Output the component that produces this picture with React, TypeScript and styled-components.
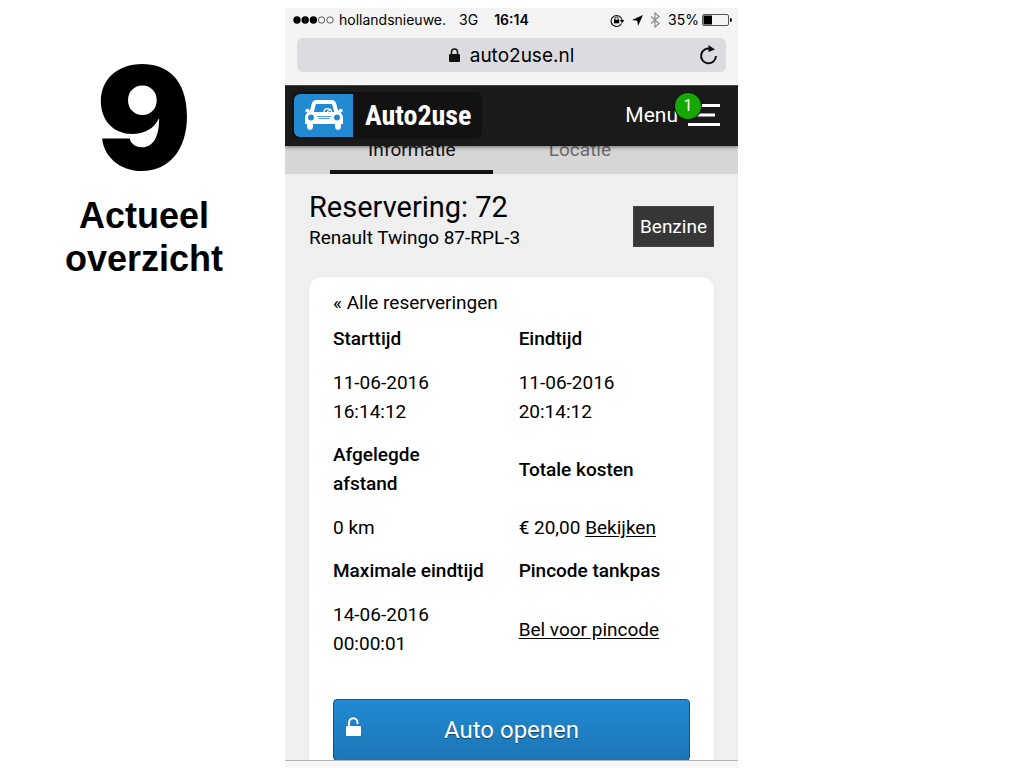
import React from "react";
import styled, { createGlobalStyle } from "styled-components";

const GlobalStyle = createGlobalStyle`
  * { box-sizing: border-box; }
  body { margin: 0; background: #fff; color: #000; }
  h1, h2, p { margin: 0; padding: 0; font-weight: 400; }
`;

const Slide = styled.main`
  display: grid;
  grid-template-columns: 285fr 453fr 286fr;
  height: 100vh;
  padding-top: 8px;
`;

const Caption = styled.section`
  padding: 32px 0 0 3px;
  text-align: center;
  font-family: "Liberation Sans", Arial, sans-serif;
`;

const StepNumber = styled.p`
  font-family: Inter, "Liberation Sans", sans-serif;
  font-size: 142px;
  line-height: 154px;
  font-weight: 900;
`;

const StepTitle = styled.h1`
  width: 160px;
  margin: 0 auto;
  font-size: 36px;
  line-height: 43px;
  font-weight: 700;
`;

const Phone = styled.section`
  display: flex;
  flex-direction: column;
  min-width: 0;
  min-height: 0;
  background: #efefef;
  font-family: Roboto, sans-serif;
  font-size: 19px;
  line-height: 29px;
`;

const BrowserBar = styled.div`
  flex: none;
  padding: 0 12px 12px;
  background: #f4f4f4;
  border-bottom: 1px solid #fff;
  font-family: Inter, sans-serif;
`;

const StatusBar = styled.div`
  display: flex;
  align-items: center;
  height: 24px;
  margin: 0 -6px 6px -4px;
  font-size: 14px;
  line-height: 24px;
  white-space: nowrap;
`;

const Signal = styled.svg`
  flex: none;
  margin-right: 5px;
`;

const Network = styled.span`
  margin-left: 13px;
`;

const Clock = styled.strong`
  margin: 0 auto 0 16px;
  font-weight: 600;
`;

const StatusIcons = styled.span`
  display: flex;
  align-items: center;
  gap: 7px;
  margin-right: 8px;
`;

const BatteryIcon = styled.svg`
  flex: none;
  margin-left: 3px;
`;

const AddressBar = styled.div`
  display: grid;
  grid-template-columns: 1fr auto 1fr;
  align-items: center;
  height: 34px;
  padding: 0 8px;
  border-radius: 6px;
  background: #dcdce0;
  font-size: 19px;
`;

const Address = styled.span`
  display: flex;
  align-items: center;
  gap: 10px;
  grid-column: 2;
`;

const PlainButton = styled.button`
  display: flex;
  justify-self: end;
  padding: 0;
  border: 0;
  background: none;
  color: inherit;
`;

const Viewport = styled.div`
  flex: 1;
  min-height: 0;
  overflow: hidden;
`;

const SiteHeader = styled.header`
  position: relative;
  z-index: 1;
  display: flex;
  align-items: center;
  justify-content: space-between;
  height: 61px;
  padding: 0 18px 2px 7px;
  background: #1a1a1a;
  border-top: 1px solid #444;
  box-shadow: 0 1px 4px rgba(0, 0, 0, 0.5);
`;

const Brand = styled.a`
  display: flex;
  align-items: center;
  gap: 12px;
  padding: 2px 11px 2px 2px;
  border-radius: 7px;
  background: #121212;
  color: #fff;
  font-family: "Liberation Sans Narrow", "Roboto Condensed", "DejaVu Sans Condensed", sans-serif;
  font-size: 28px;
  font-weight: 700;
  text-decoration: none;
`;

const BrandMark = styled.span`
  display: grid;
  place-items: center;
  width: 59px;
  height: 43px;
  border-radius: 6px 0 0 6px;
  background: #218ad3;
`;

const MenuButton = styled(PlainButton)`
  align-items: center;
  gap: 10px;
  color: #fff;
  font-family: inherit;
  font-size: 21px;
  line-height: 29px;
`;

const MenuIcon = styled.span`
  position: relative;
  display: flex;
`;

const Badge = styled.span`
  position: absolute;
  top: -10px;
  left: -13px;
  width: 26px;
  height: 26px;
  border-radius: 50%;
  background: #14a800;
  box-shadow: 0 0 0 1px #111;
  font-size: 16px;
  line-height: 26px;
  text-align: center;
`;

const Tabs = styled.nav`
  display: flex;
  gap: 5px;
  height: 48px;
  margin-top: -20px;
  padding-left: 10%;
  background: #d6d6d6;
`;

const Tab = styled.a<{ $active?: boolean }>`
  width: 40%;
  padding-top: 9px;
  border-bottom: 4px solid ${(p) => (p.$active ? "#111" : "transparent")};
  color: ${(p) => (p.$active ? "#111" : "#6b6b6b")};
  text-align: center;
  text-decoration: none;
`;

const Content = styled.div`
  padding: 0 24px;
`;

const TitleRow = styled.div`
  display: flex;
  justify-content: space-between;
  align-items: flex-start;
  height: 103px;
  padding-top: 18px;
`;

const Title = styled.h2`
  font-size: 29px;
  line-height: 31px;
`;

const Fuel = styled.span`
  margin-top: 14px;
  padding: 5px 6px;
  border: 1px solid #444;
  background: #373737;
  color: #fff;
`;

const Card = styled.article`
  padding: 11px 24px 24px;
  border-radius: 12px;
  background: #fff;
  box-shadow: 0 0 3px rgba(0, 0, 0, 0.06);
`;

const BackLink = styled.a`
  display: block;
  color: #000;
  text-decoration: none;
`;

const Details = styled.table`
  width: 100%;
  table-layout: fixed;
  border-collapse: collapse;

  th, td {
    text-align: left;
    vertical-align: middle;
  }
  th {
    padding: 7px 8px 8px 0;
    font-weight: 500;
  }
  td {
    padding: 7px 8px 7px 0;
  }
  th:first-child, td:first-child {
    width: 52%;
    padding-right: 31px;
  }
  a {
    color: #000;
    text-underline-offset: 2px;
  }
`;

const OpenButton = styled.button`
  display: grid;
  grid-template-columns: 1fr auto 1fr;
  align-items: center;
  width: 100%;
  height: 62px;
  margin-top: 34px;
  padding: 0 12px;
  border: 1px solid #1b4f78;
  border-radius: 4px;
  background: linear-gradient(#218ad3, #1c76b5);
  color: #fff;
  font-family: inherit;
  font-size: 24px;
  text-shadow: 0 1px 1px rgba(0, 0, 0, 0.5);

  svg {
    margin-bottom: 6px;
  }
`;

const BottomBar = styled.div`
  flex: none;
  height: 8px;
  border-top: 1px solid #b4b4b4;
  background: #f6f6f6;
`;

function CarIcon() {
  return (
    <svg width="38" height="30" viewBox="0 0 38 30" aria-hidden="true">
      <path
        fill="#fff"
        fillRule="evenodd"
        d="M11.5 0h15c2.500 0 4 1.200 4.700 3.500L33.200 11l.8-1.500c.4-.8 1.200-.9 2.300-.6 1.400.4 1.700 1.300 1.300 2.300-.3.900-1.200 1-2.200 1 1.400 1.800 2.600 3.400 2.600 6V23c0 .7-.4 1-1 1h-1v2.500c0 4.500-6 4.500-6 0V24H8v2.500c0 4.500-6 4.500-6 0V24H1c-.6 0-1-.3-1-1v-4.800c0-2.600 1.200-4.200 2.600-6-1 0-1.900-.1-2.200-1-.4-1 0-1.900 1.300-2.300 1.100-.3 1.900-.2 2.300.6L4.800 11l2-7.500C7.500 1.200 9 0 11.500 0zM12 4c-.8 0-1.200.4-1.400 1.200L8.800 12h20.400l-1.800-6.800C27.200 4.400 26.800 4 26 4zM6 14.500a3 3 0 1 0 0 6 3 3 0 0 0 0-6zm26 0a3 3 0 1 0 0 6 3 3 0 0 0 0-6z"
      />
      <path fill="none" stroke="#fff" strokeWidth="1.300" d="M19 12c0-4.500 7.500-4.500 7.500 0M22 11.500l3-1.500" />
      <path fill="none" stroke="#218ad3" strokeWidth=".8" d="M12 16.500h14M13.500 18.500h11" />
    </svg>
  );
}

function Lock() {
  return (
    <svg width="11" height="14" viewBox="0 0 11 14" aria-hidden="true">
      <rect y="6" width="11" height="8" rx="1" fill="#111" />
      <path d="M2.500 7V4a3 3 0 0 1 6 0v3" fill="none" stroke="#111" strokeWidth="1.500" />
    </svg>
  );
}

const details = [
  {
    labels: ["Starttijd", "Eindtijd"],
    values: ["11-06-2016 16:14:12", "11-06-2016 20:14:12"],
  },
  {
    labels: ["Afgelegde afstand", "Totale kosten"],
    values: ["0 km", <>€ 20,00 <a href="#kosten">Bekijken</a></>],
  },
  {
    labels: ["Maximale eindtijd", "Pincode tankpas"],
    values: ["14-06-2016 00:00:01", <a href="#pincode">Bel voor pincode</a>],
  },
];

export default function App() {
  return (
    <>
      <GlobalStyle />
      <Slide>
        <Caption>
          <StepNumber>9</StepNumber>
          <StepTitle>Actueel overzicht</StepTitle>
        </Caption>
        <Phone>
          <BrowserBar>
            <StatusBar>
              <Signal width="41" height="8" viewBox="0 0 41 8" aria-hidden="true">
                <circle cx="4" cy="4" r="3.700" />
                <circle cx="12.200" cy="4" r="3.700" />
                <circle cx="20.400" cy="4" r="3.700" />
                <circle cx="28.600" cy="4" r="3.200" fill="none" stroke="#333" strokeWidth=".8" />
                <circle cx="37" cy="4" r="3.200" fill="none" stroke="#333" strokeWidth=".8" />
              </Signal>
              <span>hollandsnieuwe.</span>
              <Network>3G</Network>
              <Clock>16:14</Clock>
              <StatusIcons>
                <svg width="15" height="13" viewBox="0 0 15 13" aria-hidden="true">
                  <path d="M11.500 9.500A5.500 5.500 0 1 1 12 6" fill="none" stroke="#111" strokeWidth="1.100" />
                  <path d="M9.800 6h4.600L12 9z" />
                  <rect x="4" y="5.700" width="5.200" height="3.600" />
                  <path d="M5 6V4.500a1.600 1.600 0 0 1 3.200 0V6" fill="none" stroke="#111" />
                </svg>
                <svg width="11" height="11" viewBox="0 0 11 11" aria-hidden="true">
                  <path d="M11 0 6 11 5.300 5.700 0 5z" />
                </svg>
                <svg width="10" height="16" viewBox="0 0 10 16" aria-hidden="true">
                  <path d="m1 4.500 8 7L5 15V1l4 3.500-8 7" fill="none" stroke="#8a8a8a" strokeWidth="1.200" />
                </svg>
              </StatusIcons>
              <span>35%</span>
              <BatteryIcon width="30" height="12" viewBox="0 0 30 12" aria-hidden="true">
                <rect x=".5" y=".5" width="26" height="11" rx="1.500" fill="none" stroke="#555" />
                <rect x="1.500" y="1.500" width="8.500" height="9" />
                <path d="M28 4c1.500 0 2 1 2 2s-.5 2-2 2z" />
              </BatteryIcon>
            </StatusBar>
            <AddressBar>
              <Address>
                <Lock />
                auto2use.nl
              </Address>
              <PlainButton aria-label="Vernieuwen">
                <svg width="19" height="20" viewBox="0 0 19 20" aria-hidden="true">
                  <path d="M16.900 11A7.400 7.400 0 1 1 12 4" fill="none" stroke="#111" strokeWidth="2" />
                  <path d="M9.500 0 16 4.500 9.500 7z" fill="#111" />
                </svg>
              </PlainButton>
            </AddressBar>
          </BrowserBar>
          <Viewport>
            <SiteHeader>
              <Brand href="#home">
                <BrandMark>
                  <CarIcon />
                </BrandMark>
                Auto2use
              </Brand>
              <MenuButton>
                Menu
                <MenuIcon>
                  <svg width="32" height="24" viewBox="0 0 32 24" aria-hidden="true">
                    <path d="M0 2.500h32M0 12h27M0 21.500h32" stroke="#fff" strokeWidth="3" />
                  </svg>
                  <Badge>1</Badge>
                </MenuIcon>
              </MenuButton>
            </SiteHeader>
            <Tabs>
              <Tab href="#informatie" $active>Informatie</Tab>
              <Tab href="#locatie">Locatie</Tab>
            </Tabs>
            <Content>
              <TitleRow>
                <div>
                  <Title>Reservering: 72</Title>
                  <p>Renault Twingo 87-RPL-3</p>
                </div>
                <Fuel>Benzine</Fuel>
              </TitleRow>
              <Card>
                <BackLink href="#reserveringen">« Alle reserveringen</BackLink>
                <Details>
                  <tbody>
                    {details.map((d) => (
                      <React.Fragment key={d.labels[0]}>
                        <tr>
                          <th scope="col">{d.labels[0]}</th>
                          <th scope="col">{d.labels[1]}</th>
                        </tr>
                        <tr>
                          <td>{d.values[0]}</td>
                          <td>{d.values[1]}</td>
                        </tr>
                      </React.Fragment>
                    ))}
                  </tbody>
                </Details>
                <OpenButton>
                  <svg width="16" height="20" viewBox="0 0 16 20" aria-hidden="true">
                    <rect y="9" width="15" height="10" rx="1" fill="#fff" />
                    <path d="M3 10V5.500a4 4 0 0 1 8.500 0V7" fill="none" stroke="#fff" strokeWidth="2" />
                  </svg>
                  <span>Auto openen</span>
                </OpenButton>
              </Card>
            </Content>
          </Viewport>
          <BottomBar />
        </Phone>
      </Slide>
    </>
  );
}
